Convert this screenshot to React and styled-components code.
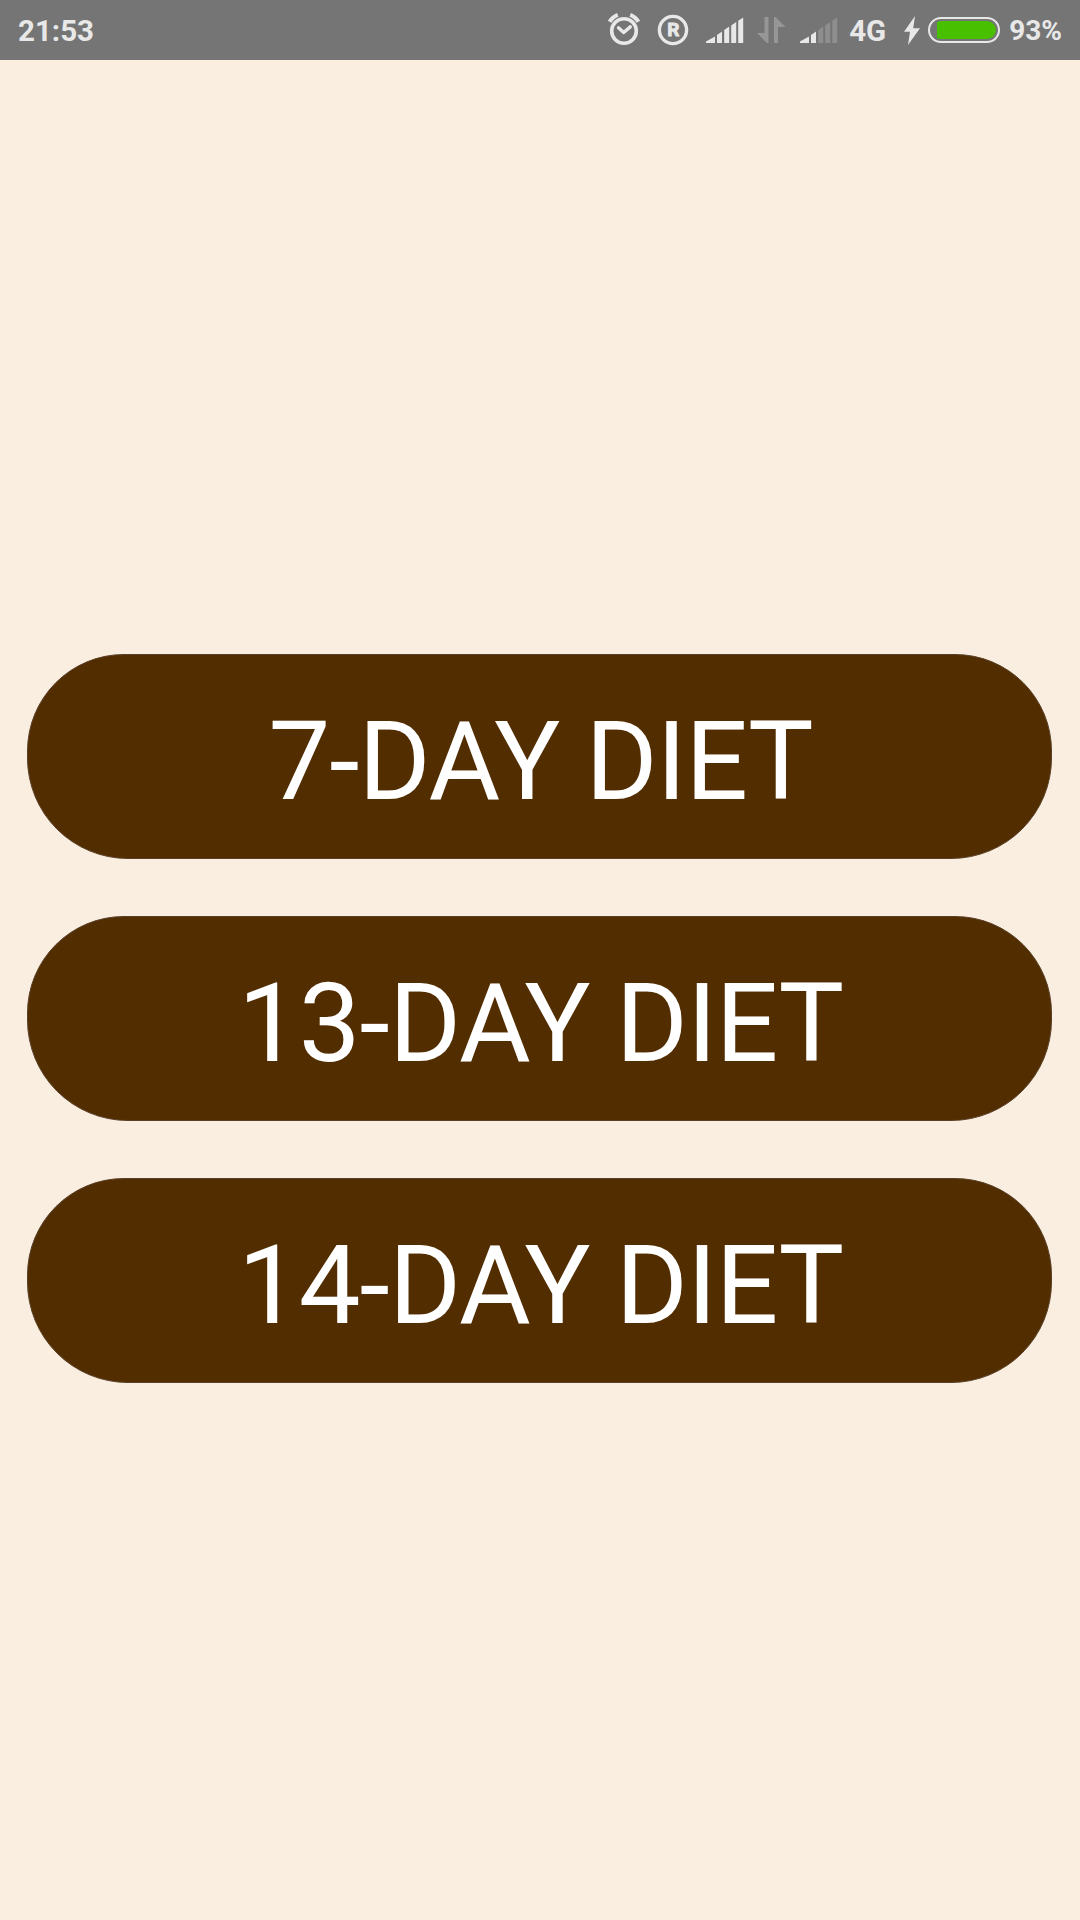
import React from "react";
import styled, { createGlobalStyle } from "styled-components";

const GlobalStyle = createGlobalStyle`
  * { box-sizing: border-box; }
  body { margin: 0; background: #f9eee0; font-family: Roboto, "Liberation Sans", sans-serif; }
`;

const Screen = styled.div`
  display: flex;
  flex-direction: column;
  height: 1920px;
  width: 1080px;
  background: #f9eee0;
  overflow: hidden;
`;

const StatusBar = styled.header`
  display: flex;
  align-items: center;
  justify-content: space-between;
  flex: none;
  height: 60px;
  padding: 0 18px;
  background: #757575;
`;

const StatusText = styled.span`
  color: #e8e8e8;
  font-size: ${(p) => p.$size || 29.5}px;
  font-weight: 700;
  line-height: 60px;
  white-space: nowrap;
  width: ${(p) => (p.$width ? `${p.$width}px` : "auto")};
  padding-top: 1px;
`;

const StatusIcons = styled.div`
  display: flex;
  align-items: center;
  height: 60px;
`;

const Icon = styled.svg`
  display: block;
  flex: none;
  width: ${(p) => p.$width}px;
  height: 60px;
  margin-right: ${(p) => p.$after}px;
  overflow: visible;
`;

const RegisteredLetter = styled.text`
  font-size: 19px;
  font-weight: 700;
  fill: #e8e8e8;
  stroke: #e8e8e8;
  stroke-width: 0.9px;
`;

const Battery = styled.div`
  flex: none;
  width: 72px;
  height: 26px;
  padding: 2px;
  margin-right: 9px;
  border: 2px solid #e8e8e8;
  border-radius: 13px;
`;

const BatteryTrack = styled.div`
  display: flex;
  justify-content: flex-end;
  height: 100%;
  border-radius: 9px;
  overflow: hidden;
`;

const BatteryLevel = styled.div`
  width: ${(p) => p.$level}%;
  background: #48c000;
`;

const Menu = styled.main`
  display: flex;
  flex-direction: column;
  gap: 57px;
  padding: 594px 27px 0;
`;

const DietButton = styled.button`
  display: block;
  width: 1025px;
  height: 205px;
  padding: 10px 0 0 2px;
  border: 1px solid #5a4028;
  border-radius: 97px 97px 101px 101px;
  background: #522d00;
  color: #fff;
  font-family: inherit;
  font-size: 110px;
  font-weight: 400;
  letter-spacing: -1.05px;
  line-height: 1;
  text-align: center;
`;

const SIGNAL_BARS = [
  "M0 43V41.5L9 36.5V43Z",
  "M11 43V35L16 31.6V43Z",
  "M18.2 43V30L23.2 26.6V43Z",
  "M25.2 43V25.5L30.2 22.1V43Z",
  "M32.2 43V20.8L37.2 17.5V43Z",
];

function Signal({ level, after }) {
  return (
    <Icon $width={38} $after={after} viewBox="0 0 38 60">
      {SIGNAL_BARS.map((d, i) => (
        <path key={d} d={d} fill={i < level ? "#e8e8e8" : "#8e8e8e"} />
      ))}
    </Icon>
  );
}

const DIETS = ["7-DAY DIET", "13-DAY DIET", "14-DAY DIET"];

export default function App() {
  return (
    <>
      <GlobalStyle />
      <Screen>
        <StatusBar>
          <StatusText>21:53</StatusText>
          <StatusIcons>
            <Icon $width={32} $after={17} viewBox="0 0 32 60" fill="none" stroke="#e8e8e8">
              <circle cx="16" cy="31" r="12.3" strokeWidth="3.6" />
              <path d="M10.5 27.8l5.2 4.7 6.6-5.6" strokeWidth="3.4" strokeLinecap="round" strokeLinejoin="round" />
              <path d="M1.6 21.8Q4.2 17 9.8 14.8M30.4 21.8Q27.8 17 22.2 14.8" strokeWidth="4" />
            </Icon>
            <Icon $width={32} $after={17} viewBox="0 0 32 60">
              <circle cx="16" cy="30" r="13.6" fill="none" stroke="#e8e8e8" strokeWidth="3.4" />
              <RegisteredLetter x="16.4" y="36.4" textAnchor="middle">R</RegisteredLetter>
            </Icon>
            <Signal level={5} after={13} />
            <Icon $width={29} $after={14} viewBox="0 0 29 60" fill="#969696">
              <path d="M7.5 17H11.5V43H10L0 33H7.5Z" />
              <path d="M17 17H18.5L28.5 27H21V43H17Z" />
            </Icon>
            <Signal level={2} after={11} />
            <StatusText $width={55}>4G</StatusText>
            <Icon $width={16} $after={8} viewBox="0 0 16 60" fill="#e8e8e8">
              <path d="M11 16L0 31.8H6L4 45L16 28.2H9.2Z" />
            </Icon>
            <Battery>
              <BatteryTrack>
                <BatteryLevel $level={93} />
              </BatteryTrack>
            </Battery>
            <StatusText $size={28}>93%</StatusText>
          </StatusIcons>
        </StatusBar>
        <Menu>
          {DIETS.map((name) => (
            <DietButton key={name}>{name}</DietButton>
          ))}
        </Menu>
      </Screen>
    </>
  );
}
